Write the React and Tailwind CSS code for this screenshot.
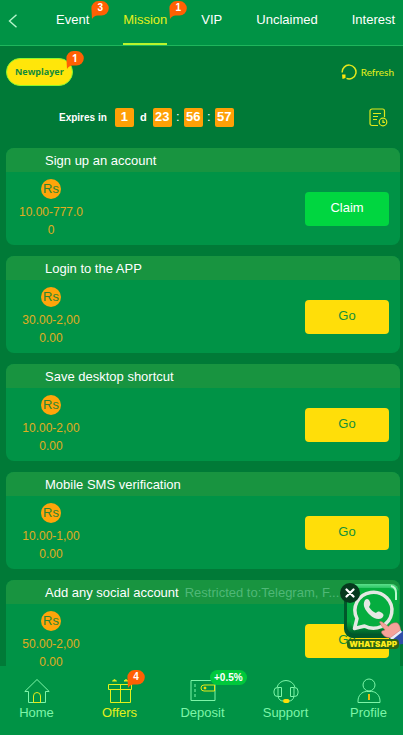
import React, { useState } from 'react';

const TABS = [
  { label: 'Event', count: 3 },
  { label: 'Mission', count: 1 },
  { label: 'VIP' },
  { label: 'Unclaimed' },
  { label: 'Interest' },
];

// Reward ranges are stored per line because the column is very narrow.
const MISSIONS = [
  { title: 'Sign up an account', reward: ['10.00-777.0', '0'], done: true },
  { title: 'Login to the APP', reward: ['30.00-2,00', '0.00'] },
  { title: 'Save desktop shortcut', reward: ['10.00-2,00', '0.00'] },
  { title: 'Mobile SMS verification', reward: ['10.00-1,00', '0.00'] },
  {
    title: 'Add any social account',
    note: 'Restricted to:Telegram, F...',
    reward: ['50.00-2,00', '0.00'],
  },
];

const COUNTDOWN = [
  { value: '1', after: 'd' },
  { value: '23', after: ':' },
  { value: '56', after: ':' },
  { value: '57' },
];

function HomeIcon() {
  return (
    <svg width="26" height="26" viewBox="0 0 26 26" fill="none" stroke="#7df5a8">
      <path d="M.8 13.500 13 1.500l12.200 12h-3.700v11h-17v-11z" />
      <path d="M9.500 24.500v-6.500a3.500 3.500 0 0 1 7 0v6.500z" stroke="#e4ea1c" />
    </svg>
  );
}

function OffersIcon() {
  return (
    <svg width="26" height="26" viewBox="0 0 26 26" fill="none" stroke="#e4f01c">
      <path d="M1.500 6.500h23v5h-23zM3.500 11.500h20v13h-20zM13.500 6.500v18" />
      <path d="M5.500 3 7.500 1.500l2 1.500zM17 3l2-1.500 2 1.500z" fill="#e4f01c" />
    </svg>
  );
}

function DepositIcon() {
  return (
    <svg width="26" height="26" viewBox="0 0 26 26" fill="none" stroke="#7df5a8">
      <path d="M1 2.500h24v20H1z" />
      <path d="M5 6v13" strokeDasharray="3 2" />
      <path d="M24.500 7H14a3 3 0 0 0-3 3v0a3 3 0 0 0 3 3h10.500z" stroke="#e4ea1c" />
      <circle cx="15" cy="10" r="1" fill="#ffde09" stroke="#ffde09" />
    </svg>
  );
}

function SupportIcon() {
  return (
    <svg width="26" height="26" viewBox="0 0 26 26" fill="none" stroke="#7df5a8">
      <path d="M4 9.500a9.200 8.800 0 0 1 18 0" />
      <path d="M8.500 9.500H4.500a3.500 3.500 0 0 0-3.500 3.500v2a3.500 3.500 0 0 0 3.500 3.500h4zM5 10v8" />
      <path d="M17.500 9.500h4a3.500 3.500 0 0 1 3.500 3.500v2a3.500 3.500 0 0 1-3.500 3.500h-4zM21 10v8" />
      <path d="M5 18.500c.8 3 2.500 4.500 5 4.500M21 18.500c-.8 3-2.500 4.500-5 4.500" />
      <rect x="10" y="21" width="6.500" height="4" rx="2" fill="#ffde09" stroke="none" />
    </svg>
  );
}

function ProfileIcon() {
  return (
    <svg width="26" height="26" viewBox="0 0 26 26" fill="none" stroke="#7df5a8">
      <circle cx="13" cy="7" r="6" />
      <path d="M2 24.500v-1.500c0-5.500 4-9.500 8.500-9.500h5c4.500 0 8.500 4 8.500 9.500v1.500z" />
      <path d="M13 16v6" stroke="#ffc409" strokeWidth="1.800" />
    </svg>
  );
}

const NAV = [
  { label: 'Home', Icon: HomeIcon },
  { label: 'Offers', Icon: OffersIcon, count: 4, active: true },
  { label: 'Deposit', Icon: DepositIcon, bonus: '+0.5%' },
  { label: 'Support', Icon: SupportIcon },
  { label: 'Profile', Icon: ProfileIcon },
];

// Speech-bubble counter, positioned by the parent.
function CountBadge({ count, className }) {
  return (
    <span className={`absolute h-[18px] w-[18px] ${className}`}>
      <svg className="absolute inset-0" width="18" height="18" viewBox="0 0 18 18">
        <path d="M7.500 0h3a7.300 7.300 0 0 1 0 14.600H6.500Q3 14.800 1 18L.4 7.300A7.200 7.200 0 0 1 7.500 0z" fill="#ff6003" />
      </svg>
      <span className="relative block text-center text-[10px] leading-[14px] font-bold text-white">{count}</span>
    </span>
  );
}

function MissionCard({ title, note, reward, done }) {
  return (
    <li className="overflow-hidden rounded-lg bg-[#009346]">
      <h2 className="flex h-6 items-center gap-1.5 bg-[#189440] pt-0.5 pl-[39px] text-[13px] whitespace-nowrap text-white">
        {title}
        {note && <span className="text-[#4fb877]">{note}</span>}
      </h2>
      <div className="flex h-[73px] items-center justify-between pr-[11px] pl-2">
        <div className="flex w-[74px] flex-col items-center text-xs leading-[18px] text-[#e0ac20]">
          <span className="mb-1 flex size-5 items-center justify-center rounded-full bg-[#ffa50a] text-[13px] text-[#2c8434]">Rs</span>
          {reward.map((line) => (
            <span key={line}>{line}</span>
          ))}
        </div>
        <button
          className={`h-[34px] w-[84px] rounded pb-0.5 text-[13px] ${
            done ? 'bg-[#00d640] text-white' : 'bg-[#ffde09] text-[#15903a]'
          }`}>
          {done ? 'Claim' : 'Go'}
        </button>
      </div>
    </li>
  );
}

function WhatsAppWidget({ onClose }) {
  return (
    <div className="absolute right-0 bottom-[84px] h-[68px] w-[62px]">
      <a href="#whatsapp" className="block h-full">
        <svg width="62" height="68" viewBox="0 0 62 68">
          <defs>
            <linearGradient id="tile" x1="0" y1="0" x2="0" y2="1">
              <stop offset="0" stopColor="#5be08a" />
              <stop offset="0.150" stopColor="#05ac45" />
              <stop offset="0.750" stopColor="#06a83e" />
              <stop offset="1" stopColor="#005c2a" />
            </linearGradient>
          </defs>
          <rect x="3" y="2" width="55" height="53" rx="9" fill="#00582a" />
          <rect x="6" y="1" width="52" height="50" rx="8" fill="url(#tile)" />
          <rect x="10" y="5" width="44" height="41" rx="6" fill="#05ad3f" />
          <path d="M50 3q5 1 5 7v7" fill="none" stroke="#baf8ce" strokeWidth="2" />
          <path d="M13.500 45.500l2.500-10a18.500 18 0 1 1 7.500 7.500z" fill="none" stroke="#e4e8e3" strokeWidth="3.500" strokeLinejoin="round" />
          <path d="M24 17c2-2 4-1 5 2 1 2 0 3-1 5 2 3 4 5 7 6 2-2 3-2 6 0 2 1 2 3 0 5-3 2-8 1-12-3-5-5-8-10-5-15z" fill="#e4e8e3" />
          <path d="M50 55l8-6 4-1v13l-8 1z" fill="#2f4fa8" />
          <path d="M48 54l11-8 2 3-10 8z" fill="#e8eefb" />
          <path d="M38.500 39c1.500-1.200 3 0 4.500 1.500l4.500 3c2-3 6-4.500 9-3.500 2 2 3 4.500 3 7l-10 7.500c-4 .5-7-1.500-8-3.500-1.500-1.500-1.500-3 1-3.500l1.500-.5c-2-2.500-4-4.500-5.500-8z" fill="#f5a39a" stroke="#ce6667" strokeWidth="0.500" />
        </svg>
        <span className="absolute right-1 bottom-0.5 rounded-sm bg-[#2c6514] px-0.5 text-[8px] leading-[10px] font-black text-[#ffed1c] [font-family:Inter,sans-serif]">
          WHATSAPP
        </span>
      </a>
      <button
        aria-label="Close"
        onClick={onClose}
        className="absolute top-0 -left-px flex size-5 items-center justify-center rounded-full bg-[#06391e]">
        <svg width="10" height="10" viewBox="0 0 10 10" stroke="#fff" strokeWidth="2.200" strokeLinecap="round">
          <path d="M1.500 1.500l7 7M8.500 1.500l-7 7" />
        </svg>
      </button>
    </div>
  );
}

export default function App() {
  const [activeTab, setActiveTab] = useState('Mission');
  const [showWidget, setShowWidget] = useState(true);

  return (
    <div className="relative flex h-screen flex-col overflow-hidden bg-[#007a37] [font-family:'Liberation_Sans',Arial,sans-serif]">
      <header className="flex h-[46px] shrink-0 items-stretch border-b border-[#1fb65c] bg-[#009345] pl-2">
        <button aria-label="Back" className="w-12 pb-1">
          <svg width="10" height="14" viewBox="0 0 10 14" fill="none" stroke="#b6f5cc" strokeWidth="1.400">
            <path d="M8.500.8 1.500 7l7 6.200" />
          </svg>
        </button>
        <nav className="flex gap-[34px]">
          {TABS.map(({ label, count }) => (
            <button
              key={label}
              onClick={() => setActiveTab(label)}
              className={`relative border-b-2 pt-px pb-1 text-[13px] ${
                label === activeTab
                  ? 'border-[#b8f52c] text-[#e4f01c]'
                  : 'border-transparent text-white'
              }`}>
              {label}
              {count && <CountBadge count={count} className="top-px left-full ml-0.5" />}
            </button>
          ))}
        </nav>
      </header>

      <main className="min-h-0 flex-1 overflow-hidden pr-[3px] pl-1.5">
        <div className="flex items-center justify-between pt-3 pr-1.5">
          <button className="relative h-7 rounded-full border border-[#8df52c] bg-[#ffe60a] px-2 text-[9px] font-bold text-[#128a3c] [font-family:'Open_Sans',sans-serif]">
            Newplayer
            <CountBadge count={1} className="-top-2 -right-3" />
          </button>
          <button className="flex items-center gap-1 text-[10px] text-[#e4f01c] [font-family:Lato,sans-serif]">
            <svg width="16" height="16" viewBox="0 0 16 16" fill="none" stroke="#e4e81c" strokeWidth="1.500">
              <path d="M1.200 8.500A6.900 6.900 0 1 1 5.500 14.400" />
              <path d="M1 10.500h3.500v3.500L1.500 15z" fill="#ffe60a" stroke="none" />
            </svg>
            Refresh
          </button>
        </div>

        <div className="flex h-[62px] items-center justify-between pr-3 pl-[53px]">
          <div className="flex items-center text-[10px] font-bold text-white">
            <span className="mr-2">Expires in</span>
            {COUNTDOWN.map(({ value, after }, i) => (
              <React.Fragment key={i}>
                <span className="flex size-[19px] items-center justify-center rounded-xs bg-[#ffa006] text-[13px]">{value}</span>
                {after && (
                  <span className={`text-center ${after === 'd' ? 'w-[19px] text-[11px]' : 'w-3 text-[13px] font-normal'}`}>{after}</span>
                )}
              </React.Fragment>
            ))}
          </div>
          <button aria-label="History">
            <svg width="19" height="19" viewBox="0 0 19 19" fill="none" stroke="#dfe81c" strokeWidth="1.200">
              <path d="M9 17.500H3a2 2 0 0 1-2-2V3a2 2 0 0 1 2-2h10.500a2 2 0 0 1 2 2v6M4 5.500h8M4 8.500h5M4 11.500h4" />
              <circle cx="14" cy="14" r="3.800" />
              <path d="M14 11.800v2.500h2" />
            </svg>
          </button>
        </div>

        <ul className="flex flex-col gap-[11px]">
          {MISSIONS.map((mission) => (
            <MissionCard key={mission.title} {...mission} />
          ))}
        </ul>
      </main>

      <footer className="shrink-0 bg-[#009345]">
        <nav className="flex h-[69px] justify-between pt-3 pl-0.5">
          {NAV.map(({ label, Icon, count, bonus, active }) => (
            <a
              key={label}
              href={`#${label.toLowerCase()}`}
              className={`relative flex w-[69px] flex-col items-center text-[13px] leading-[18px] ${
                active ? 'text-[#e4f01c]' : 'text-[#7df5a8]'
              }`}>
              <Icon />
              {label}
              {count && <CountBadge count={count} className="-top-2 left-[42px]" />}
              {bonus && (
                <span className="absolute -top-2 left-[42px] rounded-full bg-[#00c83c] px-1 text-[10px] leading-[15px] font-bold text-white">
                  {bonus}
                </span>
              )}
            </a>
          ))}
        </nav>
      </footer>

      {showWidget && <WhatsAppWidget onClose={() => setShowWidget(false)} />}
    </div>
  );
}
